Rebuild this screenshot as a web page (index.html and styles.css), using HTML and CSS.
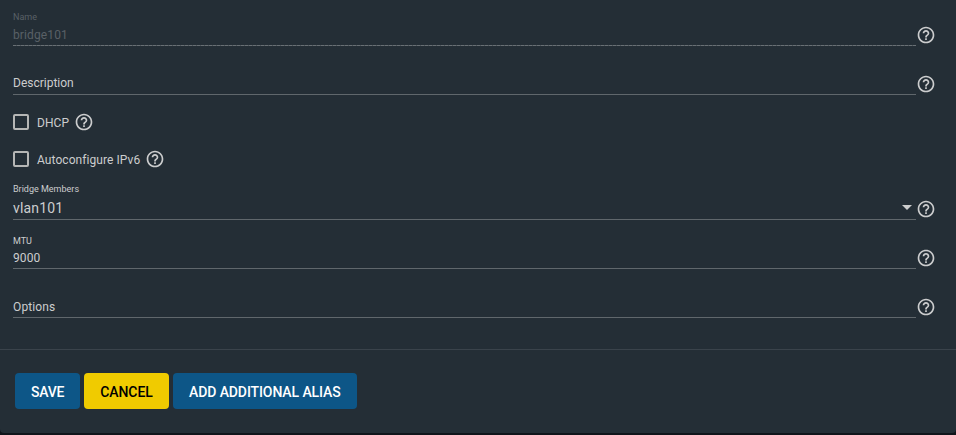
FILE: index.html
```
<!DOCTYPE html>
<html lang="en">
<head>
    <meta charset="utf-8">
    <title>Network Interface</title>
    <link rel="stylesheet" href="styles.css">
</head>
<body>
    <svg class="icon-defs" width="0" height="0">
        <symbol id="help" viewBox="0 0 24 24">
            <path d="M11 18h2v-2h-2v2zm1-16C6.480 2 2 6.480 2 12s4.480 10 10 10 10-4.480 10-10S17.520 2 12 2zm0 18c-4.410 0-8-3.590-8-8s3.590-8 8-8 8 3.590 8 8-3.590 8-8 8zm0-14c-2.210 0-4 1.790-4 4h2c0-1.100.9-2 2-2s2 .9 2 2c0 2-3 1.750-3 5h2c0-2.250 3-2.500 3-5 0-2.210-1.790-4-4-4z"/>
        </symbol>
    </svg>

    <form class="card">
        <div class="field-row first">
            <div class="field disabled">
                <span class="field-label">Name</span>
                <span class="field-value">bridge101</span>
            </div>
            <svg class="help"><use href="#help"/></svg>
        </div>

        <div class="field-row">
            <div class="field empty">
                <span class="field-value">Description</span>
            </div>
            <svg class="help"><use href="#help"/></svg>
        </div>

        <div class="checks">
            <div class="check-row">
                <span class="box"></span>
                <span class="check-label">DHCP</span>
                <svg class="help"><use href="#help"/></svg>
            </div>
            <div class="check-row">
                <span class="box"></span>
                <span class="check-label">Autoconfigure IPv6</span>
                <svg class="help"><use href="#help"/></svg>
            </div>
        </div>

        <div class="field-row">
            <div class="field select">
                <span class="field-label">Bridge Members</span>
                <span class="field-value">vlan101<span class="arrow"></span></span>
            </div>
            <svg class="help"><use href="#help"/></svg>
        </div>

        <div class="field-row">
            <div class="field">
                <span class="field-label">MTU</span>
                <span class="field-value">9000</span>
            </div>
            <svg class="help"><use href="#help"/></svg>
        </div>

        <div class="field-row">
            <div class="field">
                <span class="field-value">Options</span>
            </div>
            <svg class="help"><use href="#help"/></svg>
        </div>

        <div class="actions">
            <button type="button" class="btn save">SAVE</button>
            <button type="button" class="btn cancel">CANCEL</button>
            <button type="button" class="btn">ADD ADDITIONAL ALIAS</button>
        </div>
    </form>
</body>
</html>
```
FILE: styles.css
```
* {
    box-sizing: border-box;
}

body {
    margin: 0;
    height: 435px;
    overflow: hidden;
    background-color: #10151b;
    color: #cccdce;
    font-family: Roboto, sans-serif;
    font-size: 12px;
}

.icon-defs {
    display: block;
}

.card {
    height: 433px;
    background-color: #242e36;
    border-radius: 0 0 4px 4px;
}

.field-row {
    display: flex;
    align-items: flex-end;
    height: 49px;
    padding: 0 20px 0 13px;
}

.field-row.first {
    height: 46px;
}

.field {
    flex: 1;
    display: flex;
    flex-direction: column;
    justify-content: flex-end;
    height: 40px;
    padding-bottom: 2px;
    border-bottom: 1px solid #60676c;
}

.field-label {
    margin-bottom: 4px;
    font-size: 9px;
    line-height: 10px;
}

.field-value {
    display: flex;
    align-items: center;
    justify-content: space-between;
    height: 16px;
    line-height: 16px;
    letter-spacing: 0.12px;
}

.empty {
    padding-bottom: 3px;
}

.empty .field-value {
    letter-spacing: 0;
}

.disabled {
    color: #596066;
    padding-bottom: 3px;
    border-bottom: none;
    background: repeating-linear-gradient(to right, #697075 0 3px, #4d555b 3px 4px) bottom / 100% 1px no-repeat;
}

.disabled .field-label {
    margin-bottom: 5px;
}

.select {
    padding-bottom: 0;
}

.select .field-label {
    margin-bottom: 3px;
}

.select .field-value {
    height: 22px;
    font-size: 14px;
    letter-spacing: 0.15px;
}

.arrow {
    border: 5px solid transparent;
    border-top-color: #cccdce;
    border-bottom: none;
    margin: 0 4px 2px 0;
}

.help {
    width: 20px;
    height: 20px;
    flex: none;
    fill: #cccdce;
}

.field-row .help {
    margin-bottom: 1px;
}

.checks {
    padding: 8px 0 0 13px;
    height: 76px;
}

.check-row {
    display: flex;
    align-items: center;
    height: 37px;
}

.box {
    width: 16px;
    height: 16px;
    border: 2px solid #b5b6b5;
    border-radius: 2px;
}

.check-label {
    margin: 2px 5px 0 8px;
    letter-spacing: 0.07px;
}

.actions {
    display: flex;
    gap: 4px;
    margin-top: 31px;
    padding: 23px 15px;
    border-top: 1px solid #3a434b;
}

.btn {
    height: 36px;
    padding: 2px 16px 0;
    border: none;
    border-radius: 4px;
    background-color: #0d5687;
    color: #fff;
    font-family: inherit;
    font-size: 14px;
    font-weight: 500;
    letter-spacing: -0.1px;
    cursor: pointer;
}

.btn.save {
    width: 65px;
    letter-spacing: -0.25px;
}

.btn.cancel {
    width: 85px;
    background-color: #f0cb00;
    color: #000;
}
```
